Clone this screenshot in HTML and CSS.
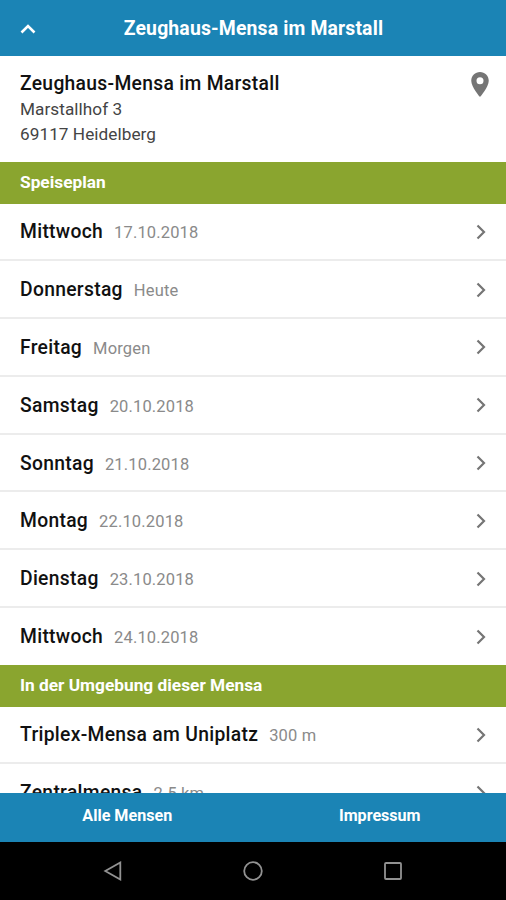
FILE: index.html
```html
<!DOCTYPE html>
<html lang="de">

	<head>
		<meta charset="UTF-8">
		<title>Zeughaus-Mensa im Marstall</title>
		<link rel="stylesheet" href="styles.css">
	</head>

	<body>
		<div id="wrap">
			<header class="top">
				<svg class="up" viewBox="0 0 16 10"><path d="M1.5 8.5L8 2l6.500 6.500"/></svg>
				<h1>Zeughaus-Mensa im Marstall</h1>
			</header>
			<main class="content">
				<div class="address">
					<div>
						<h2>Zeughaus-Mensa im Marstall</h2>
						<p>Marstallhof 3</p>
						<p>69117 Heidelberg</p>
					</div>
					<svg class="pin" viewBox="5 2 14 20"><path fill-rule="evenodd" d="M12 2C8.130 2 5 5.130 5 9c0 5.250 7 13 7 13s7-7.750 7-13c0-3.870-3.130-7-7-7zm0 9.800a2.800 2.800 0 1 1 0-5.600 2.800 2.800 0 0 1 0 5.600z"/></svg>
				</div>
				<h3>Speiseplan</h3>
				<ul>
					<li><b>Mittwoch</b><span>17.10.2018</span><svg class="arrow" viewBox="0 0 10 16"><path d="M1.500 1.500L8 8l-6.500 6.500"/></svg></li>
					<li><b>Donnerstag</b><span>Heute</span><svg class="arrow" viewBox="0 0 10 16"><path d="M1.500 1.500L8 8l-6.500 6.500"/></svg></li>
					<li><b>Freitag</b><span>Morgen</span><svg class="arrow" viewBox="0 0 10 16"><path d="M1.500 1.500L8 8l-6.500 6.500"/></svg></li>
					<li><b>Samstag</b><span>20.10.2018</span><svg class="arrow" viewBox="0 0 10 16"><path d="M1.500 1.500L8 8l-6.500 6.500"/></svg></li>
					<li><b>Sonntag</b><span>21.10.2018</span><svg class="arrow" viewBox="0 0 10 16"><path d="M1.500 1.500L8 8l-6.500 6.500"/></svg></li>
					<li><b>Montag</b><span>22.10.2018</span><svg class="arrow" viewBox="0 0 10 16"><path d="M1.500 1.500L8 8l-6.500 6.500"/></svg></li>
					<li><b>Dienstag</b><span>23.10.2018</span><svg class="arrow" viewBox="0 0 10 16"><path d="M1.500 1.500L8 8l-6.500 6.500"/></svg></li>
					<li><b>Mittwoch</b><span>24.10.2018</span><svg class="arrow" viewBox="0 0 10 16"><path d="M1.500 1.500L8 8l-6.500 6.500"/></svg></li>
				</ul>
				<h3>In der Umgebung dieser Mensa</h3>
				<ul>
					<li><b>Triplex-Mensa am Uniplatz</b><span>300 m</span><svg class="arrow" viewBox="0 0 10 16"><path d="M1.500 1.500L8 8l-6.500 6.500"/></svg></li>
					<li><b>Zentralmensa</b><span>2.5 km</span><svg class="arrow" viewBox="0 0 10 16"><path d="M1.500 1.500L8 8l-6.500 6.500"/></svg></li>
				</ul>
			</main>
			<footer class="tabs">
				<a>Alle Mensen</a>
				<a>Impressum</a>
			</footer>
			<div class="sysbar">
				<svg viewBox="0 0 20 20"><path d="M17.300 1.500v17L2.300 10z"/></svg>
				<svg viewBox="0 0 20 20"><circle cx="10" cy="10" r="8.800"/></svg>
				<svg viewBox="0 0 20 20"><rect x="2" y="2" width="16" height="16" rx="1"/></svg>
			</div>
		</div>
	</body>

</html>
```

FILE: styles.css
```css
body,
h1,
h2,
h3,
p,
ul {
	margin: 0;
	padding: 0;
}

body {
	font-family: Roboto, "Liberation Sans", sans-serif;
	background: #fff;
	overflow: hidden;
}

li {
	list-style: none;
}

#wrap {
	height: 900px;
	display: flex;
	flex-direction: column;
}

.top {
	height: 56px;
	padding: 0 19px 0 20px;
	background: #1b84b5;
	color: #fff;
	display: grid;
	grid-template-columns: 16px 1fr 16px;
	align-items: center;
	flex: none;
}

.top h1 {
	font-size: 19.4px;
	font-weight: 700;
	letter-spacing: 0.15px;
	text-align: center;
}

.up {
	width: 16px;
	height: 10px;
	margin-top: 1px;
	fill: none;
	stroke: #fff;
	stroke-width: 2.6;
}

.content {
	flex: 1;
	min-height: 0;
	overflow: hidden;
}

.address {
	height: 106px;
	box-sizing: border-box;
	padding: 15px 17px 0 20px;
	display: flex;
	justify-content: space-between;
}

.address h2 {
	font-size: 19.3px;
	line-height: 26px;
	font-weight: 500;
	letter-spacing: 0.3px;
	color: #111;
}

.address p {
	font-size: 17.2px;
	line-height: 25px;
	letter-spacing: 0.05px;
	color: #444;
}

.pin {
	width: 18px;
	height: 25px;
	margin-top: 1px;
	fill: #757575;
}

h3 {
	height: 41.5px;
	line-height: 40px;
	padding-left: 20px;
	background: #8aa52f;
	color: #fff;
	font-size: 17.3px;
	font-weight: 700;
}

li {
	height: 57.8px;
	box-sizing: border-box;
	padding: 1px 20px 0;
	border-bottom: 2px solid #ececec;
	display: flex;
	align-items: center;
}

/* the green heading or the footer follows directly */
li:last-child {
	height: 57px;
	padding-top: 0;
	border-bottom: 0;
}

li b {
	font-size: 19.3px;
	font-weight: 500;
	letter-spacing: 0.3px;
	color: #111;
}

li span {
	margin: 2px 0 0 11px;
	font-size: 16.5px;
	letter-spacing: 0.15px;
	color: #8a8a8a;
}

.arrow {
	width: 10px;
	height: 16px;
	margin-left: auto;
	fill: none;
	stroke: #757575;
	stroke-width: 2.2;
}

.tabs {
	height: 49px;
	flex: none;
	display: flex;
	padding-left: 1px;
	background: #1b84b5;
}

.tabs a {
	flex: 1;
	line-height: 46px;
	text-align: center;
	color: #fff;
	font-size: 16.1px;
	font-weight: 700;
}

.sysbar {
	height: 58px;
	flex: none;
	background: #000;
	display: flex;
	justify-content: center;
	align-items: center;
	gap: 120px;
}

.sysbar svg {
	width: 20px;
	height: 20px;
	fill: none;
	stroke: #929292;
	stroke-width: 1.8;
}
```
